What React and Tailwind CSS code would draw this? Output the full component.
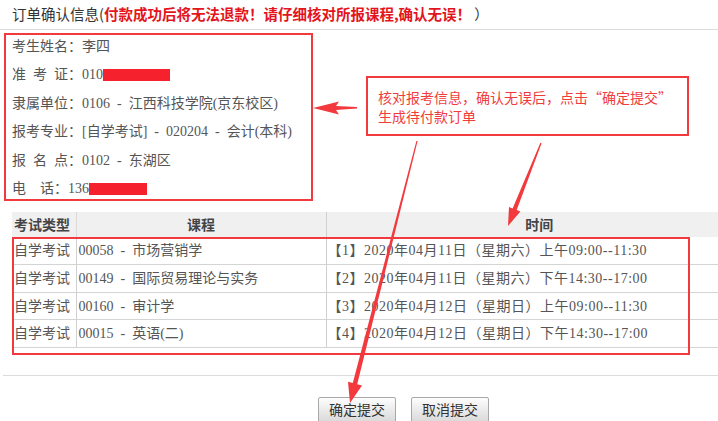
import React from 'react';

const info = [
  { label: '考生姓名：', value: '李四' },
  { label: '准 考 证：', value: '010', mask: 67 },
  { label: '隶属单位：', value: '0106 - 江西科技学院(京东校区)' },
  { label: '报考专业：', value: '[自学考试] - 020204 - 会计(本科)' },
  { label: '报 名 点：', value: '0102 - 东湖区' },
  { label: '电  话：', value: '136', mask: 58 },
];

const courses = [
  { type: '自学考试', name: '00058 - 市场营销学', time: '【1】2020年04月11日（星期六）上午09:00--11:30' },
  { type: '自学考试', name: '00149 - 国际贸易理论与实务', time: '【2】2020年04月11日（星期六）下午14:30--17:00' },
  { type: '自学考试', name: '00160 - 审计学', time: '【3】2020年04月12日（星期日）上午09:00--11:30' },
  { type: '自学考试', name: '00015 - 英语(二)', time: '【4】2020年04月12日（星期日）下午14:30--17:00' },
];

function Arrows() {
  return (
    <svg className="absolute inset-0 pointer-events-none" width="718" height="421" viewBox="0 0 718 421">
      <g fill="#f23a3e">
        {/* 指向考生信息 */}
        <polygon points="357,107 336,106 339,101.5 313,108 339,114.5 336,110 357,108.6" />
        {/* 指向时间列 */}
        <polygon points="541.6,143.2 516.7,210.1 520.4,211.6 508,226 509,207 512.6,208.4 540.4,142.8" />
        {/* 指向确定提交 */}
        <polygon points="417.6,141.1 357.2,384.2 362,385.4 350,403 348,381.8 352.8,383 416.4,140.9" />
      </g>
    </svg>
  );
}

export default function App() {
  return (
    <div className="relative w-[718px] h-[421px] overflow-hidden bg-white font-['Liberation_Serif','Noto_Sans_CJK_SC',serif] [word-spacing:3.5px]">
      <div className="h-[30px] border-b border-[#dcdcdc] pl-[12px] leading-[27px] text-[14.5px] font-['Noto_Sans_CJK_SC',sans-serif] [word-spacing:0px] text-[#333]">
        订单确认信息(
        <span className="font-bold text-[#e3141c]">付款成功后将无法退款！请仔细核对所报课程,确认无误！</span> ）
      </div>

      <div className="pt-[3px] pl-[12px] text-[14px] leading-[28.4px] text-[#555]">
        {info.map((row) => (
          <div key={row.label} className="whitespace-pre">
            {row.label}{row.value}
            {row.mask && (
              <span className="inline-block align-middle h-[12px] bg-[#f5222d] -mt-[2px]" style={{ width: row.mask }} />
            )}
          </div>
        ))}
      </div>

      <table className="mt-[9px] ml-[12px] w-[752px] table-fixed border-collapse text-[14px] text-[#555]">
        <colgroup>
          <col className="w-[64px]" />
          <col className="w-[250px]" />
          <col className="w-[438px]" />
        </colgroup>
        <thead>
          <tr className="h-[25px] bg-[#f0f0f0] text-[#444] font-bold">
            <th className="border-r border-[#dadada] px-[2px] text-left font-['Noto_Sans_CJK_SC',sans-serif]">考试类型</th>
            <th className="border-r border-[#d0d0d0] font-['Noto_Sans_CJK_SC',sans-serif]">课程</th>
            <th className="pr-[12px] font-['Noto_Sans_CJK_SC',sans-serif]">时间</th>
          </tr>
        </thead>
        <tbody>
          {courses.map((c) => (
            <tr key={c.name} className="h-[27.5px] border-b border-[#d4d4d4]">
              <td className="border-r border-[#d0d0d0] px-[2px] whitespace-nowrap">{c.type}</td>
              <td className="border-r border-[#d0d0d0] px-[2px] whitespace-nowrap">{c.name}</td>
              <td className="px-[1px] whitespace-nowrap tracking-[0.5px] [word-spacing:0px]">{c.time}</td>
            </tr>
          ))}
        </tbody>
      </table>

      <div className="mt-[27px] ml-[3px] border-t border-[#dcdcdc]" />

      <div className="mt-[21px] pl-[318px] flex gap-[15px] [word-spacing:0px]">
        <button type="button" className="w-[78px] h-[26px] border border-[#a8a8a8] rounded-[2px] bg-linear-to-b from-[#fdfdfd] to-[#d9d9d9] text-[14px] text-[#333] font-['Noto_Sans_CJK_SC',sans-serif]">
          确定提交
        </button>
        <button type="button" className="w-[78px] h-[26px] border border-[#a8a8a8] rounded-[2px] bg-linear-to-b from-[#fdfdfd] to-[#d9d9d9] text-[14px] text-[#333] font-['Noto_Sans_CJK_SC',sans-serif]">
          取消提交
        </button>
      </div>

      {/* 标注框 */}
      <div className="absolute left-[4px] top-[33px] w-[309px] h-[168px] border-2 border-[#f23a3e] pointer-events-none" />
      <div className="absolute left-[12px] top-[237px] w-[678px] h-[118px] border-2 border-[#f23a3e] pointer-events-none" />
      <div className="absolute left-[366px] top-[76px] w-[323px] h-[60px] border-2 border-[#f23a3e] pt-[10px] pl-[10px] text-[14px] leading-[18.5px] text-[#f03c3c] font-['Noto_Sans_CJK_SC',sans-serif] [word-spacing:0px]">
        <div>核对报考信息，确认无误后，点击“确定提交”</div>
        <div>生成待付款订单</div>
      </div>
      <Arrows />
    </div>
  );
}
